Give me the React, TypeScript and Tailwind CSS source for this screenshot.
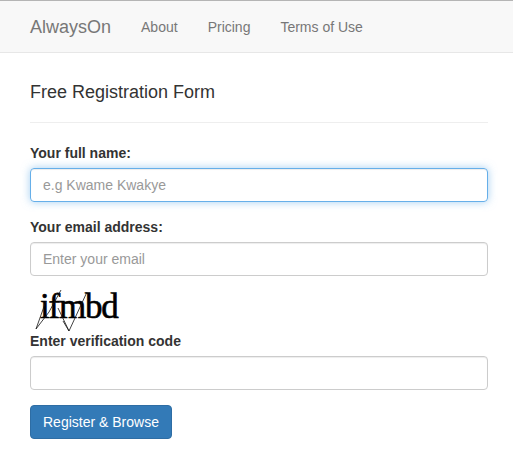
const fontStack = "font-['Liberation_Sans',Arial,sans-serif]"

function Captcha() {
    return (
        <div className="relative h-[41px] w-[120px]">
            <span className="absolute left-[10px] top-[-2px] font-['Liberation_Serif',serif] text-[35px] leading-[37px] tracking-[-1.2px] text-black [-webkit-text-stroke:0.6px_#000]">
                ifmbd
            </span>
            <svg className="absolute left-0 top-0" width="120" height="45" viewBox="0 0 120 45" fill="none" stroke="#111" strokeWidth="0.8">
                <path d="M6 39 L16 11" />
                <path d="M6 39 L19 22 L31 0" />
                <path d="M28 18 L39 41 L57 2" />
                <path d="M39 41 L33 31" />
            </svg>
        </div>
    )
}

export default function App() {
    return (
        <div className={`${fontStack} min-h-[469px] bg-white text-[14px] text-[#333]`}>
            <nav className="flex h-[53px] items-center border-t border-b border-t-[#b5b5b5] border-b-[#e7e7e7] bg-[#f8f8f8] pt-[2px] pl-[30px] text-[#777]">
                <a className="mr-[30px] text-[18px]">AlwaysOn</a>
                <a className="mr-[30px]">About</a>
                <a className="mr-[30px]">Pricing</a>
                <a>Terms of Use</a>
            </nav>

            <main className="px-[25px] pl-[30px]">
                <h4 className="mt-[29px] text-[18px] leading-[20px] font-normal">Free Registration Form</h4>
                <hr className="mt-[20px] mb-[20px] border-t border-[#eee]" />

                <form>
                    <label htmlFor="name" className="mb-[5px] block leading-[20px] font-bold">Your full name:</label>
                    <input
                        id="name"
                        placeholder="e.g Kwame Kwakye"
                        className="block h-[34px] w-full rounded-[4px] border border-[#66afe9] px-3 shadow-[inset_0_1px_1px_rgba(0,0,0,0.075),0_0_8px_rgba(102,175,233,0.6)] outline-none placeholder:text-[#999]"
                    />

                    <label htmlFor="email" className="mt-[15px] mb-[5px] block leading-[20px] font-bold">Your email address:</label>
                    <input
                        id="email"
                        placeholder="Enter your email"
                        className="block h-[34px] w-full rounded-[4px] border border-[#ccc] px-3 shadow-[inset_0_1px_1px_rgba(0,0,0,0.075)] outline-none placeholder:text-[#999]"
                    />

                    <div className="mt-[14px]">
                        <Captcha />
                    </div>

                    <label htmlFor="code" className="mb-[5px] block leading-[20px] font-bold">Enter verification code</label>
                    <input
                        id="code"
                        className="block h-[34px] w-full rounded-[4px] border border-[#ccc] px-3 shadow-[inset_0_1px_1px_rgba(0,0,0,0.075)] outline-none"
                    />

                    <button type="button" className="mt-[15px] h-[34px] rounded-[4px] border border-[#2e6da4] bg-[#337ab7] px-3 text-white">
                        Register &amp; Browse
                    </button>
                </form>
            </main>
        </div>
    )
}
